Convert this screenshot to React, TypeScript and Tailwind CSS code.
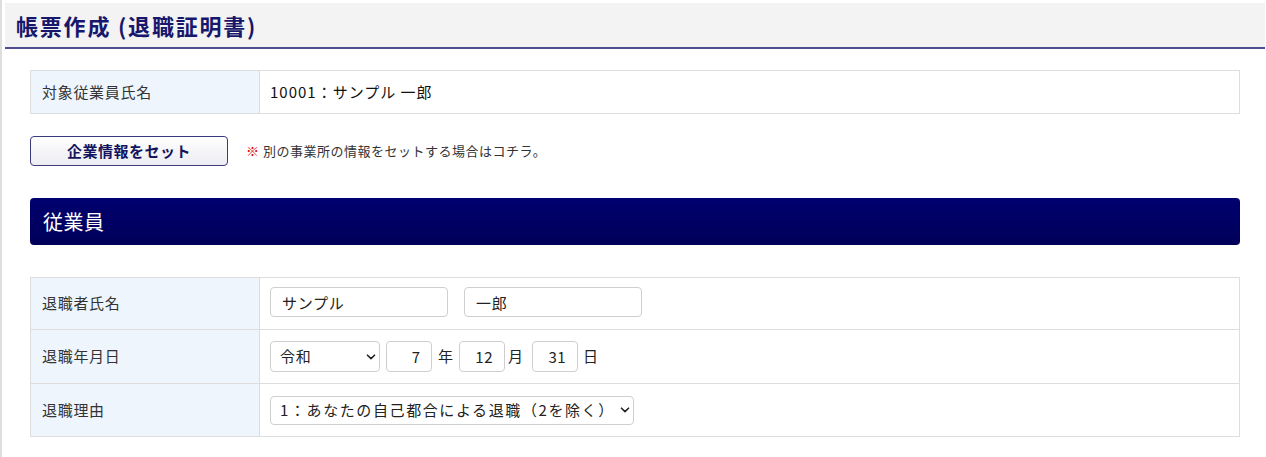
import React from 'react'

const font = { fontFamily: '"Noto Sans CJK JP", "Noto Sans", sans-serif' }

function Chevron() {
    return (
        <svg className="absolute right-[4px] top-1/2 -translate-y-1/2 pointer-events-none" width="10" height="6" viewBox="0 0 10 6" fill="none">
            <path d="M1.5 1.2 L5 4.6 L8.5 1.2" stroke="#222" strokeWidth="1.6" strokeLinecap="round" strokeLinejoin="round" />
        </svg>
    )
}

function Row({ label, children, h }: { label: string; children: React.ReactNode; h: string }) {
    return (
        <div className={`flex border-b border-[#dddddd] last:border-b-0 ${h}`}>
            <div className="w-[229px] shrink-0 bg-[#eef5fd] border-r border-[#dddddd] flex items-center pl-[11px] text-[15px] text-[#333] tracking-[0.7px]">
                {label}
            </div>
            <div className="flex-1 flex items-center pl-[10px]">{children}</div>
        </div>
    )
}

export default function App() {
    return (
        <div className="min-h-[457px] bg-white border-l-2 border-[#dedede] pl-[3px] pt-[3px] pr-[1px]" style={font}>
            <div className="h-[46px] bg-[#f3f3f3] border-b-2 border-[#4d4d8f] flex items-center pl-[11px]">
                <h1 className="text-[22px] font-bold text-[#17176b] leading-none tracking-[1.8px]">帳票作成 (退職証明書)</h1>
            </div>

            <div className="px-[25px]">
                <div className="mt-[21px] border border-[#dddddd]">
                    <Row label="対象従業員氏名" h="h-[42px]">
                        <span className="text-[15px] text-[#111] tracking-[1px]">10001：サンプル 一郎</span>
                    </Row>
                </div>

                <div className="mt-[22px] flex items-center">
                    <button className="w-[198px] h-[30px] rounded-[4px] border border-[#3c3c7c] bg-gradient-to-b from-white to-[#ececf2] text-[15px] font-bold text-[#14145e] tracking-[0.5px]">
                        企業情報をセット
                    </button>
                    <span className="ml-[18px] text-[13px] text-[#333] tracking-[0.5px]">
                        <span className="text-[#e60000] font-bold">※</span> 別の事業所の情報をセットする場合はコチラ。
                    </span>
                </div>

                <div className="mt-[32px] h-[47px] rounded-[4px] bg-gradient-to-b from-[#000070] to-[#000058] flex items-center pl-[13px]">
                    <h2 className="text-[20px] text-white tracking-[0.5px]">従業員</h2>
                </div>

                <div className="mt-[32px] border border-[#dddddd]">
                    <Row label="退職者氏名" h="h-[52px]">
                        <div className="flex gap-[16px] -mt-[3px]">
                            <input defaultValue="サンプル" className="w-[178px] h-[30px] rounded-[4px] border border-[#cfcfcf] px-[11px] text-[15px] text-[#222] tracking-[0.7px] outline-none" />
                            <input defaultValue="一郎" className="w-[178px] h-[30px] rounded-[4px] border border-[#cfcfcf] px-[11px] text-[15px] text-[#222] tracking-[0.7px] outline-none" />
                        </div>
                    </Row>
                    <Row label="退職年月日" h="h-[54px]">
                        <div className="flex items-center text-[15px] text-[#222]">
                            <div className="relative">
                                <select defaultValue="令和" className="appearance-none w-[110px] h-[31px] rounded-[4px] border border-[#cfcfcf] bg-white pl-[9px] text-[15px] text-[#222] tracking-[0.7px] outline-none">
                                    <option>令和</option>
                                    <option>平成</option>
                                </select>
                                <Chevron />
                            </div>
                            <input defaultValue="7" className="ml-[6px] w-[46px] h-[31px] rounded-[4px] border border-[#cfcfcf] pr-[11px] text-right text-[15px] outline-none" />
                            <span className="ml-[6px]">年</span>
                            <input defaultValue="12" className="ml-[6px] w-[46px] h-[31px] rounded-[4px] border border-[#cfcfcf] pr-[11px] text-right text-[15px] tracking-[0.5px] outline-none" />
                            <span className="ml-[3px]">月</span>
                            <input defaultValue="31" className="ml-[9px] w-[46px] h-[31px] rounded-[4px] border border-[#cfcfcf] pr-[11px] text-right text-[15px] tracking-[0.5px] outline-none" />
                            <span className="ml-[5px]">日</span>
                        </div>
                    </Row>
                    <Row label="退職理由" h="h-[52px]">
                        <div className="relative">
                            <select defaultValue="1" className="appearance-none w-[364px] h-[29px] rounded-[4px] border border-[#cfcfcf] bg-white pl-[9px] text-[15px] text-[#222] tracking-[1.6px] outline-none">
                                <option value="1">1：あなたの自己都合による退職（2を除く）</option>
                            </select>
                            <Chevron />
                        </div>
                    </Row>
                </div>
            </div>
        </div>
    )
}
